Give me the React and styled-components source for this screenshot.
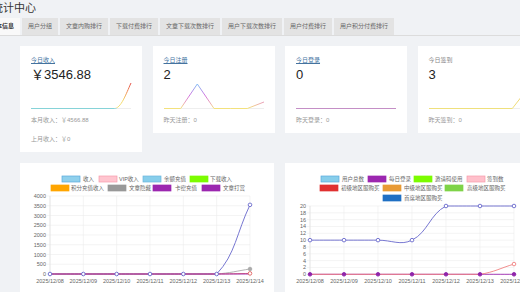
import React from 'react'
import styled, { createGlobalStyle } from 'styled-components'

const GlobalStyle = createGlobalStyle`
  body {
    margin: 0;
    background: #f0f2f5;
    overflow: hidden;
    font-family: "Liberation Sans", "Noto Sans CJK SC", sans-serif;
  }
`

const Page = styled.div`
  width: 580px;
  margin-left: -16px;
`

const Title = styled.h1`
  margin: 0;
  padding-left: 8px;
  height: 16px;
  font-size: 11px;
  line-height: 16px;
  font-weight: normal;
  color: #333;
`

const TabBar = styled.div`
  display: flex;
  gap: 2px;
  margin-top: 2px;
  border-bottom: 1px solid #dcdcdc;
`

const Tab = styled.div`
  padding: 0 6px;
  font-size: 6px;
  line-height: 17px;
  white-space: nowrap;
  background: ${p => (p.$active ? '#f9f9f9' : '#e3e3e3')};
  color: ${p => (p.$active ? '#333' : '#666')};
  font-weight: ${p => (p.$active ? 'bold' : 'normal')};
`

const Content = styled.div`
  padding: 10px 0 0 36px;
`

const CardGrid = styled.div`
  display: grid;
  grid-template-columns: repeat(4, 122px);
  column-gap: 10.5px;
  align-items: start;
`

const Card = styled.div`
  background: #fff;
  padding: 10px 11px 9px;
`

const CardLabel = styled.div`
  font-size: 6px;
  line-height: 8px;
  color: ${p => (p.$link ? '#44739f' : '#888')};
  text-decoration: ${p => (p.$link ? 'underline' : 'none')};
`

const CardValue = styled.div`
  margin-top: 4px;
  font-size: 13px;
  line-height: 14px;
  color: #222;
`

const Spark = styled.svg`
  display: block;
  width: 100px;
  height: 28px;
  overflow: visible;
`

const CardNote = styled.div`
  margin-top: ${p => p.$gap}px;
  font-size: 6px;
  line-height: 8px;
  color: #999;
`

const ChartGrid = styled.div`
  display: grid;
  grid-template-columns: repeat(2, 254px);
  column-gap: 11px;
  margin-top: 11px;
`

const ChartPanel = styled.div`
  background: #fff;
  height: 140px;
`

const ChartSvg = styled.svg`
  display: block;
  width: 254px;
  height: 130px;
  font-family: "Liberation Sans", "Noto Sans CJK SC", sans-serif;
`

const tabs = ['基本信息', '用户分组', '文章内购排行', '下载付费排行', '文章下载次数排行', '用户下载次数排行', '用户付费排行', '用户积分付费排行']

const cards = [
  {
    label: '今日收入', link: true, value: '￥3546.88',
    notes: ['本月收入：￥4566.88', '上月收入：￥0'],
    path: 'M0,26.5 L83.3,26.5 C90,26.5 95,12 100,1',
    stops: [[0, '#e4514c'], [0.35, '#ef8a52'], [0.7, '#f3d866'], [0.98, '#f3e27e'], [1, '#86d3d8']],
  },
  {
    label: '今日注册', link: true, value: '2',
    notes: ['昨天注册：0'],
    path: 'M0,26.5 L16.7,26.5 L33.3,2 L50,26.5 L66.7,26.5 L83.3,26.5 L100,20',
    stops: [[0, '#7cc2f6'], [0.2, '#9aa6ee'], [0.5, '#d374e0'], [0.8, '#eba6b4'], [1, '#f3e17c']],
  },
  {
    label: '今日登录', link: true, value: '0',
    notes: ['昨天登录：0'],
    path: 'M0,26.5 L100,26.5',
    stops: [[0, '#c48fc6'], [1, '#c48fc6']],
  },
  {
    label: '今日签到', link: false, value: '3',
    notes: ['昨天签到：0'],
    path: 'M0,26.5 L83.3,26.5 L100,5',
    stops: [[0, '#f0c86a'], [1, '#efe07c']],
  },
]

const dates = ['2025/12/08', '2025/12/09', '2025/12/10', '2025/12/11', '2025/12/12', '2025/12/13', '2025/12/14']

const incomeChart = {
  top: 33, bottom: 111, left: 30, right: 230, labelX: 26, yMax: 4000, yStep: 500,
  legend: [
    { y: 16, box: 42, tx: 63, fill: '#8fd0ec', stroke: '#5aa9dc', text: '收入' },
    { y: 16, box: 79, tx: 99, fill: '#ffc5cf', stroke: '#f59bab', text: 'VIP收入' },
    { y: 16, box: 123, tx: 144, fill: '#87ceeb', stroke: '#6bb6dc', text: '余额充值' },
    { y: 16, box: 170, tx: 190, fill: '#7cfc00', stroke: '#7cfc00', text: '下载收入' },
    { y: 25, box: 31, tx: 51, fill: '#ffa500', stroke: '#ffa500', text: '积分充值收入' },
    { y: 25, box: 88, tx: 109, fill: '#999999', stroke: '#999999', text: '文章隐藏' },
    { y: 25, box: 133, tx: 155, fill: '#9c27b0', stroke: '#9c27b0', text: '卡密充值' },
    { y: 25, box: 182, tx: 203, fill: '#9c27b0', stroke: '#9c27b0', text: '文章打赏' },
  ],
  series: [
    { color: '#6868cc', data: [0, 0, 0, 0, 0, 0, 3546.88], points: 'hollow' },
    { color: '#aaaaaa', data: [0, 0, 0, 0, 0, 0, 256], points: 'filled', last: true },
    { color: '#e06060', data: [0, 0, 0, 0, 0, 0, 30], points: 'hollow', last: true },
    { color: '#9c27b0', data: [0, 0, 0, 0, 0, 0, 0] },
  ],
}

const userChart = {
  top: 43, bottom: 111.3, left: 25, right: 229, labelX: 21, yMax: 20, yStep: 2,
  legend: [
    { y: 16, box: 36, tx: 57, fill: '#87ceeb', stroke: '#5aa9dc', text: '用户总数' },
    { y: 16, box: 83, tx: 104, fill: '#9c27b0', stroke: '#9c27b0', text: '每日登录' },
    { y: 16, box: 129, tx: 150, fill: '#7cfc00', stroke: '#7cfc00', text: '邀请码使用' },
    { y: 16, box: 182, tx: 202, fill: '#ffc0cb', stroke: '#f59bab', text: '签到数' },
    { y: 25, box: 35, tx: 56, fill: '#e03131', stroke: '#e03131', text: '初级地区服购买' },
    { y: 25, box: 98, tx: 119, fill: '#e89a35', stroke: '#e89a35', text: '中级地区服购买' },
    { y: 25, box: 160, tx: 182, fill: '#7ed348', stroke: '#7ed348', text: '高级地区服购买' },
    { y: 35, box: 98, tx: 119, fill: '#1f6fc4', stroke: '#1f6fc4', text: '首席地区服购买' },
  ],
  series: [
    { color: '#9c27b0', data: [0, 0, 0, 0, 0, 0, 0] },
    { color: '#f08080', data: [0, 0, 0, 0, 0, 0, 3], points: 'hollow', last: true },
    { color: '#6868cc', data: [10, 10, 10, 10, 20, 20, 20], points: 'hollow' },
    { color: '#8e24aa', data: [0, 0, 0, 0, 0, 0, 0], points: 'filled', noLine: true },
  ],
}

// chart.js style spline with tension, control points capped to the chart area
function splinePath(pts, t, top, bottom) {
  const clamp = v => Math.min(Math.max(v, top), bottom)
  const cps = pts.map((p, i) => {
    const prev = pts[i - 1] || p
    const next = pts[i + 1] || p
    const d01 = Math.hypot(p.x - prev.x, p.y - prev.y)
    const d12 = Math.hypot(next.x - p.x, next.y - p.y)
    const sum = d01 + d12 || 1
    const fa = t * (d01 / sum)
    const fb = t * (d12 / sum)
    return {
      px: p.x - fa * (next.x - prev.x), py: clamp(p.y - fa * (next.y - prev.y)),
      nx: p.x + fb * (next.x - prev.x), ny: clamp(p.y + fb * (next.y - prev.y)),
    }
  })
  let d = `M${pts[0].x},${pts[0].y}`
  for (let i = 1; i < pts.length; i++) {
    d += ` C${cps[i - 1].nx},${cps[i - 1].ny} ${cps[i].px},${cps[i].py} ${pts[i].x},${pts[i].y}`
  }
  return d
}

function LineChart({ cfg }) {
  const { top, bottom, left, right, labelX, yMax, yStep, legend, series } = cfg
  const n = dates.length
  const xAt = i => left + (i * (right - left)) / (n - 1)
  const yAt = v => bottom - (v / yMax) * (bottom - top)
  const ticks = []
  for (let v = 0; v <= yMax; v += yStep) ticks.push(v)

  return (
    <ChartSvg viewBox="0 0 254 130">
      {legend.map(l => (
        <g key={l.text}>
          <rect x={l.box} y={l.y - 3} width="18" height="6" fill={l.fill} stroke={l.stroke} strokeWidth="0.7" />
          <text x={l.tx} y={l.y + 2} fontSize="5.5" fill="#666">{l.text}</text>
        </g>
      ))}
      {ticks.map(v => (
        <g key={v}>
          <line x1={left - 3} x2={right} y1={yAt(v)} y2={yAt(v)} stroke="#ececec" strokeWidth="0.6" />
          <text x={labelX} y={yAt(v) + 2} fontSize="5.5" fill="#666" textAnchor="end">{v}</text>
        </g>
      ))}
      {dates.map((d, i) => (
        <g key={d}>
          <line x1={xAt(i)} x2={xAt(i)} y1={top} y2={bottom + 3} stroke="#ececec" strokeWidth="0.6" />
          <text x={xAt(i)} y={120} fontSize="5.5" fill="#666" textAnchor="middle">{d}</text>
        </g>
      ))}
      <line x1={left} x2={left} y1={top} y2={bottom} stroke="#dedede" strokeWidth="0.6" />
      {series.filter(s => !s.noLine).map((s, k) => (
        <path
          key={k}
          d={splinePath(s.data.map((v, i) => ({ x: xAt(i), y: yAt(v) })), 0.4, top, bottom)}
          fill="none"
          stroke={s.color}
          strokeWidth="0.9"
        />
      ))}
      {series.filter(s => s.points).map((s, k) =>
        s.data.map((v, i) =>
          s.last && i < n - 1 ? null : (
            <circle
              key={`${k}-${i}`}
              cx={xAt(i)}
              cy={yAt(v)}
              r="1.8"
              fill={s.points === 'filled' ? s.color : '#fff'}
              stroke={s.color}
              strokeWidth="0.9"
            />
          )
        )
      )}
    </ChartSvg>
  )
}

function StatCard({ card, index }) {
  const id = `spark-${index}`
  return (
    <Card>
      <CardLabel $link={card.link}>{card.label}</CardLabel>
      <CardValue>{card.value}</CardValue>
      <Spark viewBox="0 0 100 28">
        <defs>
          <linearGradient id={id} gradientUnits="userSpaceOnUse" x1="0" y1="1" x2="0" y2="26">
            {card.stops.map(([o, c]) => <stop key={o} offset={o} stopColor={c} />)}
          </linearGradient>
        </defs>
        <line x1="0" x2="100" y1="26.5" y2="26.5" stroke="#eeeeee" strokeWidth="1" />
        <path d={card.path} fill="none" stroke={`url(#${id})`} strokeWidth="1" strokeLinejoin="round" />
      </Spark>
      {card.notes.map((t, i) => (
        <CardNote key={t} $gap={i === 0 ? 6 : 11}>{t}</CardNote>
      ))}
    </Card>
  )
}

export default function App() {
  return (
    <>
      <GlobalStyle />
      <Page>
        <Title>统计中心</Title>
        <TabBar>
          {tabs.map((t, i) => (
            <Tab key={t} $active={i === 0}>{t}</Tab>
          ))}
        </TabBar>
        <Content>
          <CardGrid>
            {cards.map((c, i) => <StatCard key={c.label} card={c} index={i} />)}
          </CardGrid>
          <ChartGrid>
            <ChartPanel><LineChart cfg={incomeChart} /></ChartPanel>
            <ChartPanel><LineChart cfg={userChart} /></ChartPanel>
          </ChartGrid>
        </Content>
      </Page>
    </>
  )
}
